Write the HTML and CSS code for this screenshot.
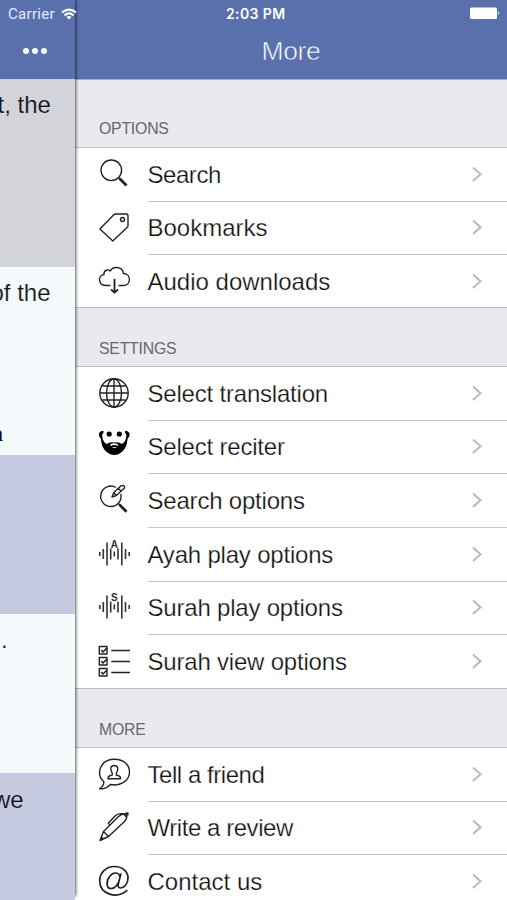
FILE: index.html
```html
<!DOCTYPE html>
<html lang="en">
<head>
<meta charset="utf-8">
<title>More</title>
<link rel="stylesheet" href="styles.css">
</head>
<body>
<div class="screen">
  <div class="status">
    <span class="carrier">Carrier</span>
    <svg class="wifi" width="16" height="12" viewBox="0 0 16 12" fill="none" stroke="#fff" stroke-width="2"><path d="M1 4.600Q8-1.400 15 4.600M3.500 7.400Q8 3.400 12.500 7.400"/><path d="M8 11.500L5.400 9Q8 6.800 10.600 9Z" fill="#fff" stroke="none"/></svg>
    <span class="time">2:03 PM</span>
    <svg class="battery" width="30" height="13" viewBox="0 0 30 13" fill="#fff"><rect x="0" y="0.500" width="27" height="11.500" rx="1.500"/><path d="M28 4.500q2 1.700 0 3.500z"/></svg>
  </div>
  <aside class="page">
    <div class="bar dots"><i></i><i></i><i></i></div>
    <div class="verse v1"><p>t, the</p></div>
    <div class="verse v2"><p>of the</p><b>a</b></div>
    <div class="verse v3"></div>
    <div class="verse v4"><p>.</p></div>
    <div class="verse v5"><p>we</p></div>
  </aside>
  <main class="menu">
    <h1 class="bar title">More</h1>
    <h2 class="first">OPTIONS</h2>
    <ul>
      <li><svg class="icon" viewBox="0 0 32 32"><circle cx="12.300" cy="11.300" r="10.300"/><path d="M19.600 18.600l2.500 2.500"/><path d="M20.500 19.500l7 7" stroke-width="2.800"/></svg><span class="tight">Search</span></li>
      <li><svg class="icon" viewBox="0 0 32 32"><path d="M.900 17L14.800 2.700Q15.500 2 16.500 2H27Q29 2 29 4V13.500Q29 14.500 28.300 15.300L13.800 29Z"/><circle cx="23.500" cy="7.500" r="2"/></svg><span class="loose">Bookmarks</span></li>
      <li><svg class="icon" viewBox="0 0 32 32"><path d="M11.500 19.500H7.500C-1.300 19.500-1.500 9.500 5 8.500C4.500 4 9.500 2.800 11.300 5C13.500 0 23.500 0 24.500 7.500C33 8 31.800 19.500 24.500 19.500H19.500"/><path d="M15.500 13V26M12 23.500l3.500 3L19 23.500" stroke-width="1.800"/></svg><span class="loose">Audio downloads</span></li>
    </ul>
    <h2>SETTINGS</h2>
    <ul>
      <li><svg class="icon" viewBox="0 0 32 32"><circle cx="15" cy="15" r="14.200"/><ellipse cx="15" cy="15" rx="7.500" ry="14"/><path d="M15 1v28M1 15h28M3.300 8h23.400M3.300 22h23.400"/></svg><span>Select translation</span></li>
      <li><svg class="icon" viewBox="0 0 32 32"><path fill="#000" stroke="none" d="M4.500 0C1-.500-1 2.500.200 5C.500 6.500 1.700 7 2 8.500C2.300 13 3.500 17 7 20.500C10 23 12.500 24 15.300 24C18 24 20.500 23 23.500 20.500C27 17 28.200 13 28.500 8.500C28.800 7 30 6.500 30.300 5C31.500 2.500 29.500-.500 26 0Q25.500 2 27.500 4L26.700 8.500Q25.800 11.500 23 13Q20 10.700 15.300 11.500Q10.500 10.700 7.600 13Q4.700 11.500 3.900 8.500L3 4Q5 2 4.500 0Z"/><path d="M11.500 14.500Q13.500 12.500 15.300 13.500Q17 12.500 19 14.500" stroke="#fff" stroke-width="1.600"/><path d="M13.500 16.500h3.600" stroke="#fff" stroke-width=".8"/><circle cx="10.200" cy="3" r="2.600" fill="#000" stroke="none"/><circle cx="20.300" cy="3" r="2.600" fill="#000" stroke="none"/></svg><span>Select reciter</span></li>
      <li><svg class="icon" viewBox="0 0 32 32"><path d="M17 2.500A10.200 10.200 0 1 0 21.800 9M19.600 18.800l2 2"/><path d="M20.500 19.700l7 7" stroke-width="2.800"/><path d="M13 12L14.800 7.500L22 .800Q25.800-.500 25.500 3L17.300 10.500ZM15 8l2.200 2.200M19.300 3.300l2.400 2.400"/></svg><span>Search options</span></li>
      <li><svg class="icon wave" viewBox="0 0 32 32"><path d="M.800 13v4M4.300 10v10M8 3.500v23M11.700 9.500v11M15.300 12.500v5M19 9.500v11M22.800 3.500v23M26.500 10v10M30.200 13v4"/><text x="15.300" y="8.500">A</text></svg><span>Ayah play options</span></li>
      <li><svg class="icon wave" viewBox="0 0 32 32"><path d="M.800 13v4M4.300 10v10M8 3.500v23M11.700 9.500v11M15.300 12.500v5M19 9.500v11M22.800 3.500v23M26.500 10v10M30.200 13v4"/><text x="15.300" y="8.500">S</text></svg><span>Surah play options</span></li>
      <li><svg class="icon" viewBox="0 0 32 32"><path d="M.300 .500h7.700v7.500H.300zM.300 11.500h7.700v7.500H.300zM.300 22.500h7.700v7.500H.300z"/><path d="M2.200 4l1.800 2L8 2M2.200 15l1.800 2L8 13M2.200 26l1.800 2L8 24M12.300 4.500H31M12.300 15.500H31M12.300 26.500H31" stroke-width="1.600"/></svg><span>Surah view options</span></li>
    </ul>
    <h2>MORE</h2>
    <ul>
      <li><svg class="icon" viewBox="0 0 32 32"><path d="M4.800 22.800C-3.500 15 1 .200 15.500 .200C25 .200 30.500 6 30.500 13C30.500 22 21 27.500 11.500 25.500Q6.500 30.500.500 29.800Q5 27 4.800 22.800Z"/><path d="M9 19.800Q8.800 16.800 13 16.300Q13.800 14.800 12.900 13.300C11 10.500 11.300 6.500 15.300 6.500C19.200 6.500 19.500 10.500 17.700 13.300Q16.800 14.800 17.500 16.300Q21.800 16.800 21.600 19.800Z"/></svg><span class="tight">Tell a friend</span></li>
      <li><svg class="icon" viewBox="0 0 32 32"><path d="M1 28.500L4.500 19.500L19.500 4.500Q24 .500 27.700 2.200Q28.500 6 25.500 9.500L9.500 24.500ZM4.500 19.500L9.500 24.500M1 28.500L4 25.500M24.500 2l3.700 3.700M26.500 1.200L29 1L28.800 3.500M10.500 12.500L9.300 11.300L16 4Q18.500 1 24 1.800"/></svg><span class="tight">Write a review</span></li>
      <li><svg class="icon" viewBox="0 0 32 32"><path stroke-width="1.700" d="M28.300 24.200C18 33.500.700 28.500.700 14.800C.700 7 7 .500 15.500 .500C23.500 .500 29 5.500 29 12C29 18 25 22 21.500 22C18.500 22 19 19.500 19.500 17L22 7.500M21 11.500C20.500 5.500 14 6 11 10C6.500 15.500 7.500 22.500 12 22.500C16 22.500 19.500 18 21 11.500"/></svg><span class="loose">Contact us</span></li>
    </ul>
  </main>
</div>
<script>
// Every row ends in the same disclosure chevron.
document.querySelectorAll('li span').forEach(s => s.insertAdjacentHTML('afterend',
  '<svg class="chevron" width="12" height="18" viewBox="0 0 12 18"><path d="M2 1.500l7.500 6.800L2 15"/></svg>'));
</script>
</body>
</html>
```
FILE: styles.css
```css
* { box-sizing: border-box; margin: 0; padding: 0; }
body { font-family: "Liberation Sans", Arial, sans-serif; color: #111; overflow: hidden; }
.screen { position: relative; display: grid; grid-template-columns: 75px 432px; width: 507px; height: 900px; overflow: hidden; background: #fff; }
.status { position: absolute; z-index: 3; top: 0; left: 0; width: 507px; height: 27px; display: grid; grid-template-columns: 53px 165px 244px 30px; align-items: center; padding-left: 8px; color: #fff; font-family: Inter, sans-serif; }
.carrier { color: #e3eaff; font-family: Roboto, sans-serif; font-size: 15px; letter-spacing: .3px; }
.time { font-family: Inter, sans-serif; font-weight: 600; font-size: 14px; letter-spacing: .4px; }
.bar { height: 79px; background: #5a70ac; color: #fff; }
.page { position: relative; z-index: 2; height: 896px; box-shadow: 1px 0 3px rgba(0,0,0,.65); background: #c5cae1; }
.dots { display: flex; gap: 3px; padding: 48px 0 0 22.500px; }
.dots i { width: 6px; height: 6px; border-radius: 50%; background: #fff; }
.verse { position: relative; overflow: hidden; font-size: 24px; line-height: 28px; letter-spacing: 0; }
.verse p { width: max-content; -webkit-text-stroke: .2px #f4f9fb; }
.v1 { height: 188px; background: #d3d4da; padding-top: 12px; }
.v1 p { margin-left: -2.500px; -webkit-text-stroke-color: #d3d4da; }
.v2 { height: 188px; background: #f4f9fb; padding-top: 12px; }
.v2 p { margin-left: -9.500px; }
.v2 b { display: block; margin: 112px 0 0 -9px; font: bold 24px/28px "Liberation Serif", serif; }
.v3 { height: 159px; background: #c5cae1; }
.v4 { height: 159px; background: #f4f9fb; padding-top: 12px; }
.v4 p { margin-left: 1px; }
.v5 { height: 127px; background: #c5cae1; padding-top: 13px; }
.v5 p { margin-left: -7px; -webkit-text-stroke-color: #c5cae1; }
.menu { background: #fff; }
.title { display: flex; justify-content: center; padding-top: 35px; font-size: 26.500px; line-height: 32px; font-weight: 400; letter-spacing: -.4px; -webkit-text-stroke: .6px #5a70ac; }
h2 { height: 60px; padding: 31px 0 0 24px; background: #eae9ef; border-bottom: 1px solid #c3c3c7; border-top: 1px solid #bcbcc1; font-size: 15.800px; line-height: 20px; font-weight: 400; color: #67676c; letter-spacing: -.2px; }
h2.first { height: 69px; border-top: 1px solid #a0aed5; padding-top: 39px; }
ul { list-style: none; }
li { display: grid; grid-template-columns: 32px 1fr 12px; align-items: center; column-gap: 16.500px; height: 53.650px; padding: 0 24px; font-size: 24px; background: linear-gradient(#c4c4c6, #c4c4c6) 73px 100% / 100% 1px no-repeat; }
li:last-child { background: none; }
ul:nth-of-type(1) { height: 159px; }
ul:nth-of-type(2) { height: 321px; }
li span { -webkit-text-stroke: .25px #fff; letter-spacing: -.2px; white-space: nowrap; }
li .tight { letter-spacing: -.45px; }
li .loose { letter-spacing: 0; }
.icon { width: 32px; height: 32px; fill: none; stroke: #222; stroke-width: 1.400; stroke-linejoin: round; overflow: visible; }
.wave { stroke-width: 1.600; stroke: #333; }
.wave text { font: bold 10px "Liberation Sans", sans-serif; text-anchor: middle; fill: #333; stroke: none; }
.chevron { fill: none; stroke: #b9b9bd; stroke-width: 2; }
```
